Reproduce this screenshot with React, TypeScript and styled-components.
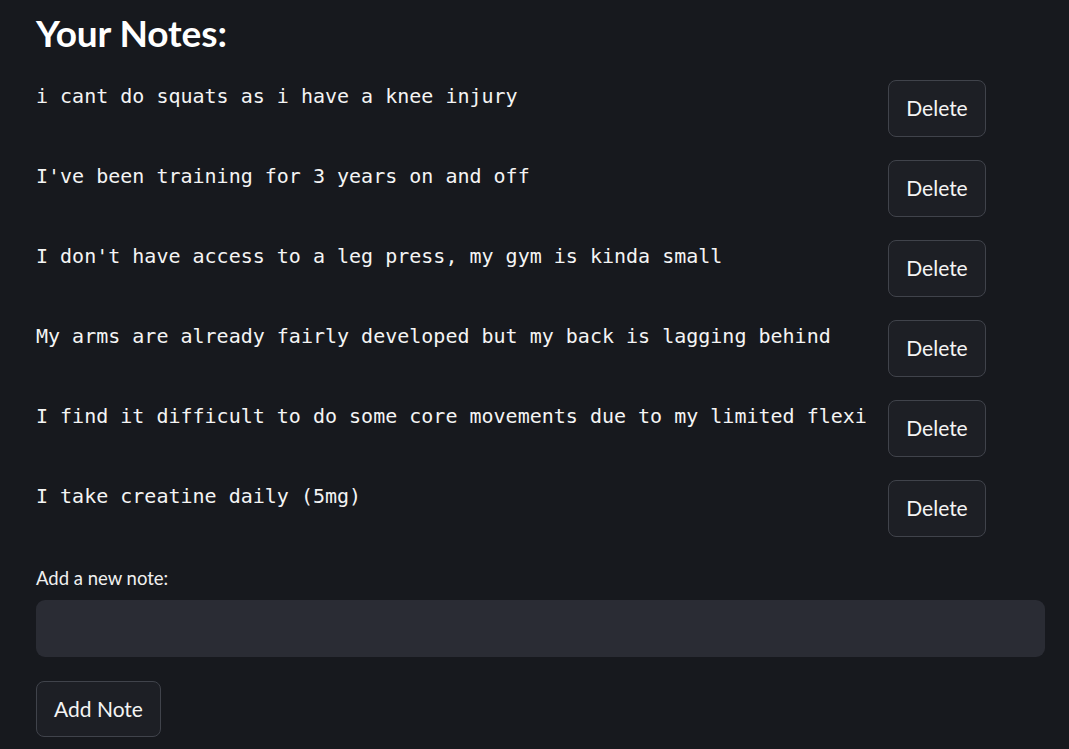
import React from "react";
import styled, { createGlobalStyle } from "styled-components";

const Global = createGlobalStyle`
  html, body { margin: 0; padding: 0; background: #17191e; }
  body { font-family: Lato, "Noto Sans", sans-serif; color: #fafafa; }
  * { box-sizing: border-box; }
`;

const Page = styled.main`
  width: 1069px;
  height: 749px;
  overflow: hidden;
  padding: 11px 24px 0 36px;
  display: flex;
  flex-direction: column;
`;

const Title = styled.h1`
  margin: 0 0 25px 0;
  font-family: Lato, sans-serif;
  font-weight: 700;
  font-size: 37px;
  line-height: 1.2;
  color: #ffffff;
  letter-spacing: -0.1px;
`;

const List = styled.div`
  display: flex;
  flex-direction: column;
  gap: 23px;
`;

const Row = styled.div`
  display: grid;
  grid-template-columns: 830px 98px;
  column-gap: 22px;
  align-items: start;
`;

const NoteText = styled.div`
  margin-top: 4px;
  font-family: "DejaVu Sans Mono", "Liberation Mono", monospace;
  font-size: 20px;
  line-height: 24px;
  color: #f4f4f4;
  white-space: nowrap;
  overflow: hidden;
  text-overflow: clip;
`;

const Button = styled.button<{ $w?: number; $h?: number }>`
  width: ${(p) => p.$w ?? 98}px;
  height: ${(p) => p.$h ?? 57}px;
  border: 1.5px solid #40434b;
  border-radius: 8px;
  background: #1d1f25;
  color: #f4f4f4;
  font-family: Lato, sans-serif;
  font-size: 21px;
  padding: 0 0 2px 0;
  cursor: pointer;
`;

const Label = styled.label`
  margin-top: 30px;
  font-size: 18.5px;
  line-height: 22px;
  color: #f0f0f0;
`;

const Input = styled.input`
  margin-top: 11px;
  width: 1009px;
  height: 57px;
  border: none;
  border-radius: 9px;
  background: #2a2c34;
  color: #fafafa;
  font-family: Lato, sans-serif;
  font-size: 20px;
  padding: 0 16px;
  outline: none;
`;

const AddRow = styled.div`
  margin-top: 24px;
`;

const notes = [
  "i cant do squats as i have a knee injury",
  "I've been training for 3 years on and off",
  "I don't have access to a leg press, my gym is kinda small",
  "My arms are already fairly developed but my back is lagging behind",
  "I find it difficult to do some core movements due to my limited flexibility",
  "I take creatine daily (5mg)",
];

export default function App() {
  return (
    <>
      <Global />
      <Page>
        <Title>Your Notes:</Title>
        <List>
          {notes.map((n, i) => (
            <Row key={i}>
              <NoteText>{n}</NoteText>
              <Button>Delete</Button>
            </Row>
          ))}
        </List>
        <Label>Add a new note:</Label>
        <Input aria-label="Add a new note" />
        <AddRow>
          <Button $w={125} $h={56}>Add Note</Button>
        </AddRow>
      </Page>
    </>
  );
}
